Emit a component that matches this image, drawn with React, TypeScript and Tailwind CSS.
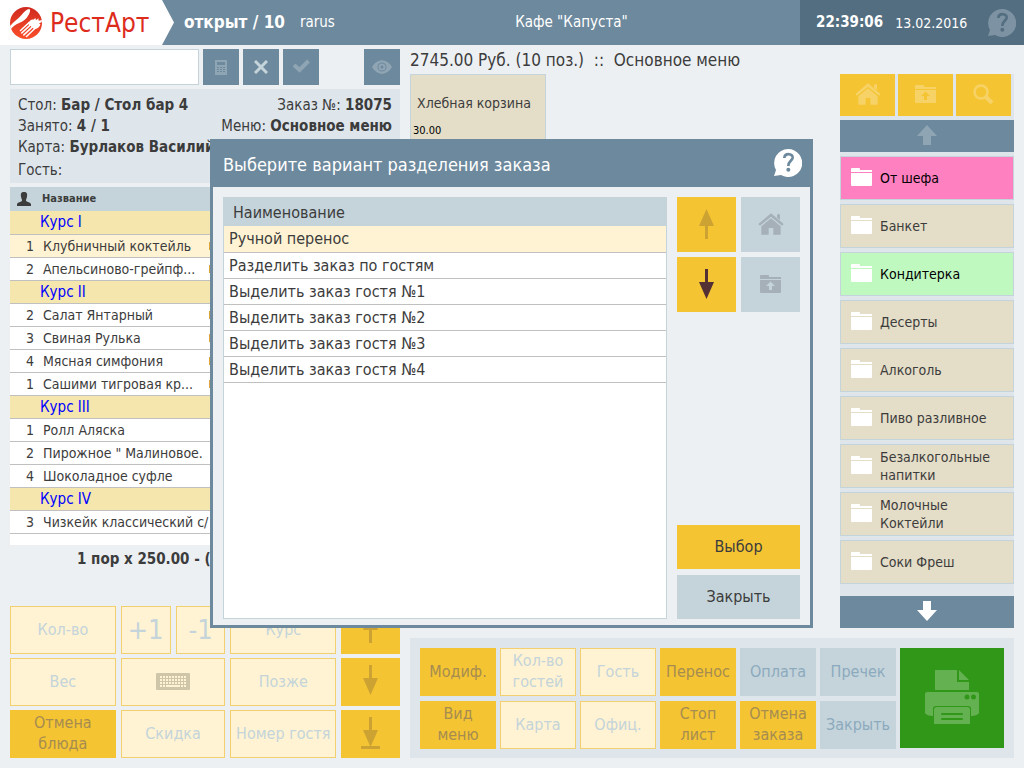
import React, { ReactNode, useState } from "react"
import clsx from "clsx"

type OrderRow = { course: string } | { qty: number; name: string; mark?: boolean }

const orderRows: OrderRow[] = [
  { course: "Курс I" },
  { qty: 1, name: "Клубничный коктейль", mark: true },
  { qty: 2, name: "Апельсиново-грейпф...", mark: true },
  { course: "Курс II" },
  { qty: 2, name: "Салат Янтарный", mark: true },
  { qty: 3, name: "Свиная Рулька", mark: true },
  { qty: 4, name: "Мясная симфония", mark: true },
  { qty: 1, name: "Сашими тигровая кр...", mark: true },
  { course: "Курс III" },
  { qty: 1, name: "Ролл Аляска" },
  { qty: 2, name: 'Пирожное " Малиновое.' },
  { qty: 4, name: "Шоколадное суфле" },
  { course: "Курс IV" },
  { qty: 3, name: "Чизкейк классический с/" },
]

const categories = [
  { name: "От шефа", color: "bg-[#ff80c0] text-black" },
  { name: "Банкет", color: "bg-[#e4ddc7]" },
  { name: "Кондитерка", color: "bg-[#c0f9c0] text-black" },
  { name: "Десерты", color: "bg-[#e4ddc7]" },
  { name: "Алкоголь", color: "bg-[#e4ddc7]" },
  { name: "Пиво разливное", color: "bg-[#e4ddc7]" },
  { name: "Безалкогольные напитки", color: "bg-[#e4ddc7]" },
  { name: "Молочные Коктейли", color: "bg-[#e4ddc7]" },
  { name: "Соки Фреш", color: "bg-[#e4ddc7]" },
]

const splitOptions = [
  "Ручной перенос",
  "Разделить заказ по гостям",
  "Выделить заказ гостя №1",
  "Выделить заказ гостя №2",
  "Выделить заказ гостя №3",
  "Выделить заказ гостя №4",
]

const tones = {
  yellow: "bg-[#f5c433] text-[#a68c50]",
  pale: "bg-[#fff3d3] border border-[#f3d06f] text-[#c4d4da]",
  gray: "bg-[#c4d4da] text-[#8caabe]",
}

const actions: { text: string; tone: keyof typeof tones }[] = [
  { text: "Модиф.", tone: "yellow" },
  { text: "Кол-во гостей", tone: "pale" },
  { text: "Гость", tone: "pale" },
  { text: "Перенос", tone: "yellow" },
  { text: "Оплата", tone: "gray" },
  { text: "Пречек", tone: "gray" },
  { text: "Вид меню", tone: "yellow" },
  { text: "Карта", tone: "pale" },
  { text: "Офиц.", tone: "pale" },
  { text: "Стоп лист", tone: "yellow" },
  { text: "Отмена заказа", tone: "yellow" },
  { text: "Закрыть", tone: "gray" },
]

const LogoIcon = () => (
  <svg width="32" height="32" viewBox="0 0 96 96" aria-hidden="true">
    <defs>
      <linearGradient id="logo" x1="0" y1="0" x2="0" y2="1">
        <stop offset="0" stopColor="#cf2a1f" />
        <stop offset="1" stopColor="#fb4f2a" />
      </linearGradient>
    </defs>
    <circle cx="48" cy="48" r="48" fill="url(#logo)" />
    <path d="M0 58C10 45 22 38 34 25C42 15 48 8 57 6C63 6 60 18 55 25C50 36 40 43 29 47C18 52 8 58 3 66Z" fill="#fff" />
    <path d="M54 50C58 42 64 37 70 38L76 33L78 40L85 34L86 41L96 39L95 46L87 49L91 52C90 60 80 68 72 66Z" fill="#fff" />
    <path d="M58 46L30 72M63 52L34 79M69 58L40 85M76 63L48 90" stroke="#fff" strokeWidth="4.500" />
  </svg>
)

const HelpIcon = ({ className, mark }: { className: string; mark: string }) => (
  <svg width="28" height="28" viewBox="0 0 84 84" className={className} aria-hidden="true">
    <path d="M42 0a42 42 0 1 1-21 78L0 81L6 63A42 42 0 0 1 42 0Z" fill="currentColor" />
    <path d="M31 27c1-16 26-14 25-1c-1 10-13 10-13 25" fill="none" stroke={mark} strokeWidth="8" />
    <circle cx="43" cy="62" r="6" fill={mark} />
  </svg>
)

const HomeIcon = () => (
  <svg width="26" height="22" viewBox="0 0 78 66" fill="currentColor" aria-hidden="true">
    <path d="M39 1L77 33L72 38L39 11L6 38L1 33Z" />
    <path d="M39 16L68 40V65H46V45H32V65H10V40Z" />
    <path d="M57 6l5-4l4 3v16l-9-7Z" />
  </svg>
)

const FolderIcon = () => (
  <svg width="21" height="18" viewBox="0 0 21 18" fill="currentColor" aria-hidden="true">
    <path d="M0 4V1q0-1 1-1h7q1 0 1 1v1h12v2ZM0 5h21v12q0 1-1 1H1q-1 0-1-1Z" />
  </svg>
)

const FolderUpIcon = () => (
  <svg width="21" height="18" viewBox="0 0 21 18" fill="currentColor" aria-hidden="true">
    <path d="M0 4V1q0-1 1-1h7q1 0 1 1v1h12v2Z" />
    <path fillRule="evenodd" d="M0 5h21v12q0 1-1 1H1q-1 0-1-1ZM10.500 6.500L6 11h3v4h3v-4h3Z" />
  </svg>
)

const SearchIcon = () => (
  <svg width="21" height="21" viewBox="0 0 21 21" fill="none" stroke="currentColor" aria-hidden="true">
    <circle cx="8" cy="8" r="6.500" strokeWidth="2.500" />
    <path d="M12.500 12.500L19 19" strokeWidth="4" />
  </svg>
)

const CalculatorIcon = () => (
  <svg width="12" height="15" viewBox="0 0 12 15" fill="currentColor" aria-hidden="true">
    <path
      fillRule="evenodd"
      d="M0 0h12v15H0ZM2 2v3h8V2ZM2 7v1h2V7ZM5 7v1h2V7ZM8 7v1h2V7ZM2 9v1h2V9ZM5 9v1h2V9ZM8 9v1h2V9ZM2 11v1h2v-1ZM5 11v1h2v-1ZM8 11v1h2v-1Z"
    />
  </svg>
)

const CloseIcon = () => (
  <svg width="14" height="14" viewBox="0 0 14 14" stroke="currentColor" strokeWidth="3" aria-hidden="true">
    <path d="M1 1L13 13M13 1L1 13" />
  </svg>
)

const CheckIcon = () => (
  <svg width="17" height="16" viewBox="0 0 17 16" fill="none" stroke="currentColor" strokeWidth="4" aria-hidden="true">
    <path d="M1 6L6.500 11L15.500 2" />
  </svg>
)

const EyeIcon = () => (
  <svg width="20" height="14" viewBox="0 0 20 14" fill="currentColor" aria-hidden="true">
    <path fillRule="evenodd" d="M0 7C5-2 15-2 20 7C15 16 5 16 0 7ZM10 2.500a4.500 4.500 0 1 0 0 9a4.500 4.500 0 1 0 0-9Z" />
    <path fillRule="evenodd" d="M10 3.500a3.500 3.500 0 1 0 0 7a3.500 3.500 0 1 0 0-7ZM10 5.500a1.500 1.500 0 1 1 0 3a1.500 1.500 0 1 1 0-3Z" />
  </svg>
)

const PersonIcon = () => (
  <svg width="14" height="14" viewBox="0 0 14 14" fill="currentColor" aria-hidden="true">
    <path d="M7 0c3 0 3.500 2 3 4.500C9.800 6.500 9 7 9 8.500c0 1.500 5 1.500 5 4V14H0v-1.500c0-2.500 5-2.500 5-4C5 7 4.200 6.500 4 4.500C3.500 2 4 0 7 0Z" />
  </svg>
)

const ThinArrow = ({ dir, bar }: { dir: "up" | "down"; bar?: boolean }) => (
  <svg width="19" height="32" viewBox="0 0 19 32" fill="currentColor" aria-hidden="true">
    <path d={dir === "up" ? "M9.500 0L17 17H11V30H8V17H2Z" : "M8 0H11V13H17L9.500 30L2 13H8Z"} />
    {bar && <path d="M0 29H19V32H0Z" />}
  </svg>
)

const WideArrow = ({ dir }: { dir: "up" | "down" }) => (
  <svg width="20" height="20" viewBox="0 0 20 20" className="mb-0.5" fill="currentColor" aria-hidden="true">
    <path d={dir === "up" ? "M10 0L20 11H14V20H6V11H0Z" : "M6 0H14V9H20L10 20L0 9H6Z"} />
  </svg>
)

const KeyboardIcon = () => (
  <svg width="34" height="17" viewBox="0 0 34 17" aria-hidden="true">
    <rect width="34" height="17" rx="1" fill="#cfc6aa" />
    <g stroke="#fff3d3" strokeWidth="2">
      <path d="M4 4H30M4 7H30M4 10H30" strokeDasharray="2 1" />
      <path d="M4 13H6M7 13H9M10 13H24M25 13H27M28 13H30" />
    </g>
  </svg>
)

const PrinterIcon = () => (
  <svg width="54" height="54" viewBox="0 0 54 54" className="mb-0.5" fill="#64b152" aria-hidden="true">
    <path d="M10 0H32V12H44V20H10ZM34 0L44 10H34Z" />
    <path
      fillRule="evenodd"
      d="M2 22H52Q54 22 54 24V43Q52 46 46 46V39Q46 36 43 36H11Q8 36 8 39V46Q2 46 0 43V24Q0 22 2 22ZM42 24.500a2.500 2.500 0 1 0 0 5a2.500 2.500 0 1 0 0-5ZM48.500 24.500a2.500 2.500 0 1 0 0 5a2.500 2.500 0 1 0 0-5Z"
    />
    <path d="M12 37H42Q45 37 45 40V54H9V40Q9 37 12 37Z" />
    <path d="M17 44H37M17 49H37" stroke="#319719" strokeWidth="2" strokeLinecap="round" />
  </svg>
)

const ToolButton = ({ label, className, children }: { label: string; className?: string; children: ReactNode }) => (
  <button aria-label={label} className={clsx("flex size-9 items-center justify-center bg-[#6d899d]", className)}>
    {children}
  </button>
)

const PadButton = ({
  tone,
  label,
  className = "px-1 text-base",
  children,
}: {
  tone: keyof typeof tones
  label?: string
  className?: string
  children: ReactNode
}) => (
  <button
    aria-label={label}
    className={clsx("flex h-12 items-center justify-center pb-0.5 text-center leading-[21px]", tones[tone], className)}
  >
    {children}
  </button>
)

const Header = () => (
  <header className="flex h-[45px] items-center bg-[#6d899d] text-white">
    <div className="flex h-full w-[174px] items-center gap-2 bg-white pl-[10px] [clip-path:polygon(0_0,162px_0,100%_50%,162px_100%,0_100%)]">
      <LogoIcon />
      <span className="text-[26px] leading-8 text-[#dd2c1c]">РестАрт</span>
    </div>
    <span className="ml-[10px] text-[17px] font-bold">открыт / 10</span>
    <span className="ml-[15px] text-[15px]">rarus</span>
    <h1 className="flex-1 pl-2 text-center text-[15px]">Кафе "Капуста"</h1>
    <div className="flex h-full w-56 items-center bg-[#536e81] pr-2 pl-4">
      <time className="text-[15px] font-bold">22:39:06</time>
      <time className="ml-3 text-sm">13.02.2016</time>
      <button aria-label="Справка" className="ml-auto">
        <HelpIcon className="text-[#7d93a3]" mark="#536e81" />
      </button>
    </div>
  </header>
)

const OrderInfo = () => (
  <div className="mt-1 h-[94px] bg-[#dee6ec] px-2 pt-1.5 text-[15px] leading-[21px]">
    <div className="flex justify-between">
      <span>
        Стол: <b>Бар / Стол бар 4</b>
      </span>
      <span>
        Заказ №: <b>18075</b>
      </span>
    </div>
    <div className="flex justify-between">
      <span>
        Занято: <b>4 / 1</b>
      </span>
      <span>
        Меню: <b>Основное меню</b>
      </span>
    </div>
    <div>
      Карта: <b>Бурлаков Василий</b>
    </div>
    <div className="pt-0.5">Гость:</div>
  </div>
)

const OrderTable = () => (
  <div className="mt-1 flex-1 overflow-hidden bg-white">
    <table className="w-full table-fixed border-collapse text-sm leading-[22px]">
      <colgroup>
        <col className="w-[30px]" />
        <col className="w-[169px]" />
        <col />
      </colgroup>
      <thead>
        <tr className="h-6 bg-[#c4d4da] text-left text-[11px] leading-4">
          <th className="py-0 pl-[7px]" aria-label="Гость">
            <PersonIcon />
          </th>
          <th className="py-0 pl-0.5" colSpan={2}>
            Название
          </th>
        </tr>
      </thead>
      <tbody>
        {orderRows.map((row, i) =>
          "course" in row ? (
            <tr key={i} className="h-[23px] border-b border-[#c0c0c0] bg-[#f4e6ad] text-[15px] text-[#0000ff]">
              <td className="p-0" />
              <td className="p-0" colSpan={2}>
                {row.course}
              </td>
            </tr>
          ) : (
            <tr key={i} className={clsx("h-[23px] border-b border-[#c0c0c0]", i === 1 && "bg-[#fff3d3]")}>
              <td className="p-0 pr-1.5 text-right">{row.qty}</td>
              <td className="p-0 pl-[3px] whitespace-nowrap">{row.name}</td>
              <td className="p-0">{row.mark && <span className="block h-2 w-2 bg-[#e0a63c]" />}</td>
            </tr>
          ),
        )}
      </tbody>
    </table>
  </div>
)

const OrderPanel = () => {
  const [query, setQuery] = useState("")

  return (
    <section className="flex flex-col">
      <div className="flex gap-1">
        <input
          aria-label="Поиск"
          value={query}
          onChange={(e) => setQuery(e.target.value)}
          className="h-9 w-[189px] min-w-0 border border-[#c4d4da] bg-white px-2 text-base outline-none"
        />
        <ToolButton label="Калькулятор" className="text-[#8fa5b4]">
          <CalculatorIcon />
        </ToolButton>
        <ToolButton label="Очистить" className="text-[#c4d4da]">
          <CloseIcon />
        </ToolButton>
        <ToolButton label="Принять" className="text-[#8fa5b4]">
          <CheckIcon />
        </ToolButton>
        <ToolButton label="Просмотр" className="ml-auto text-[#8fa5b4]">
          <EyeIcon />
        </ToolButton>
      </div>
      <OrderInfo />
      <OrderTable />
      <p className="mb-[33px] pl-[67px] text-[15px] leading-7 font-bold">1 пор x 250.00 - (</p>
      <div className="grid grid-cols-[106fr_50fr_50fr_106fr_59fr] gap-x-[5px] gap-y-1">
        <PadButton tone="pale">Кол-во</PadButton>
        <PadButton tone="pale" className="text-[27px]">
          +1
        </PadButton>
        <PadButton tone="pale" className="text-[27px]">
          -1
        </PadButton>
        <PadButton tone="pale">Курс</PadButton>
        <PadButton tone="yellow" label="Вверх" className="text-[#cca233]">
          <ThinArrow dir="up" />
        </PadButton>
        <PadButton tone="pale">Вес</PadButton>
        <PadButton tone="pale" label="Клавиатура" className="col-span-2">
          <KeyboardIcon />
        </PadButton>
        <PadButton tone="pale">Позже</PadButton>
        <PadButton tone="yellow" label="Вниз" className="text-[#cca233]">
          <ThinArrow dir="down" />
        </PadButton>
        <PadButton tone="yellow" className="px-4 text-base">
          Отмена блюда
        </PadButton>
        <PadButton tone="pale" className="col-span-2 text-base">
          Скидка
        </PadButton>
        <PadButton tone="pale">Номер гостя</PadButton>
        <PadButton tone="yellow" label="В конец" className="text-[#cca233]">
          <ThinArrow dir="down" bar />
        </PadButton>
      </div>
    </section>
  )
}

const CategorySidebar = () => (
  <nav className="flex w-[174px] flex-col bg-[#dee6ec]">
    <div className="grid grid-cols-3 gap-[3px] pr-[3px] text-[#f7d266]">
      <button aria-label="Главная" className="flex h-[42px] items-center justify-center bg-[#f5c433] pb-0.5">
        <HomeIcon />
      </button>
      <button aria-label="На уровень выше" className="flex h-[42px] items-center justify-center bg-[#f5c433] pb-0.5">
        <FolderUpIcon />
      </button>
      <button aria-label="Найти" className="flex h-[42px] items-center justify-center bg-[#f5c433] pb-0.5">
        <SearchIcon />
      </button>
    </div>
    <button aria-label="Прокрутить вверх" className="my-1 flex h-8 items-center justify-center bg-[#6d899d] text-[#8fa5b4]">
      <WideArrow dir="up" />
    </button>
    <div className="flex flex-col gap-1">
      {categories.map(({ name, color }) => (
        <button
          key={name}
          className={clsx("flex h-11 items-center gap-2 border border-[#c4d4da] pl-[10px] text-left text-sm leading-[18px]", color)}
        >
          <span className="pb-0.5 text-white">
            <FolderIcon />
          </span>
          <span className="flex-1">{name}</span>
        </button>
      ))}
    </div>
    <button aria-label="Прокрутить вниз" className="mt-auto flex h-8 items-center justify-center bg-[#6d899d] text-white">
      <WideArrow dir="down" />
    </button>
  </nav>
)

const MenuPanel = () => (
  <section className="flex flex-col">
    <h2 className="h-[25px] text-[17px] leading-[23px] whitespace-pre">2745.00 Руб. (10 поз.)  ::  Основное меню</h2>
    <div className="flex flex-1 items-stretch justify-between">
      <div>
        <button className="flex h-[74px] w-[136px] flex-col border border-[#c4d4da] bg-[#e4ddc7] text-left">
          <span className="px-1.5 pt-[19px] text-sm leading-[18px]">Хлебная корзина</span>
          <span className="px-0.5 pt-[11px] text-[11px] leading-4 text-black">30.00</span>
        </button>
      </div>
      <CategorySidebar />
    </div>
    <div className="mt-[10px] flex gap-1 bg-[#dee6ec] p-[10px] pb-[9px]">
      <div className="grid flex-1 grid-cols-6 gap-x-1 gap-y-[5px]">
        {actions.map(({ text, tone }) => (
          <PadButton key={text + tone} tone={tone}>
            {text}
          </PadButton>
        ))}
      </div>
      <button aria-label="Печать" className="flex h-[100px] w-[104px] items-center justify-center bg-[#319719]">
        <PrinterIcon />
      </button>
    </div>
  </section>
)

const SplitDialog = () => {
  const [selected, setSelected] = useState(0)

  return (
    <div className="absolute inset-0 flex items-center justify-center pr-px pb-px">
      <div
        role="dialog"
        aria-labelledby="split-title"
        className="w-[603px] border-[3px] border-t-0 border-[#6d899d] bg-[#ecf0f3]"
      >
        <div className="flex h-12 items-center justify-between bg-[#6d899d] pr-2 pl-[10px] text-white">
          <h2 id="split-title" className="pt-1 text-lg">
            Выберите вариант разделения заказа
          </h2>
          <button aria-label="Справка">
            <HelpIcon className="text-white" mark="#6d899d" />
          </button>
        </div>
        <div className="flex gap-[10px] px-[10px] pt-[10px] pb-1.5">
          <div className="min-h-[422px] flex-1 border border-[#c4d4da] bg-white">
            <table className="w-full border-collapse text-base leading-[25px]">
              <thead>
                <tr className="h-7 bg-[#c4d4da] text-left">
                  <th className="p-0 pl-[9px] font-normal">Наименование</th>
                </tr>
              </thead>
              <tbody>
                {splitOptions.map((option, i) => (
                  <tr
                    key={option}
                    onClick={() => setSelected(i)}
                    className={clsx("h-[26px] border-b border-[#c0c0c0]", i === selected && "bg-[#fff3d3]")}
                  >
                    <td className="p-0 pl-[5px]">{option}</td>
                  </tr>
                ))}
              </tbody>
            </table>
          </div>
          <div className="flex w-[123px] flex-col">
            <div className="grid grid-cols-2 gap-[5px]">
              <button aria-label="Вверх" className="flex h-[55px] items-center justify-center bg-[#f5c433] text-[#cca233]">
                <ThinArrow dir="up" />
              </button>
              <button aria-label="Главная" className="flex h-[55px] items-center justify-center bg-[#c4d4da] pb-0.5 text-[#a5b0b9]">
                <HomeIcon />
              </button>
              <button aria-label="Вниз" className="flex h-[55px] items-center justify-center bg-[#f5c433] text-[#523033]">
                <ThinArrow dir="down" />
              </button>
              <button aria-label="На уровень выше" className="flex h-[55px] items-center justify-center bg-[#c4d4da] pb-0.5 text-[#a5b0b9]">
                <FolderUpIcon />
              </button>
            </div>
            <button className="mt-auto h-11 bg-[#f5c433] text-base">Выбор</button>
            <button className="mt-1.5 h-11 bg-[#c4d4da] text-base">Закрыть</button>
          </div>
        </div>
      </div>
    </div>
  )
}

const App = () => (
  <div className="relative flex min-h-screen flex-col bg-[#ecf0f3] font-['DejaVu_Sans_Condensed','DejaVu_Sans',sans-serif] text-[#3c3c3c]">
    <Header />
    <main className="grid flex-1 grid-cols-[390fr_604fr] gap-[10px] px-[10px] pt-1 pb-[10px]">
      <OrderPanel />
      <MenuPanel />
    </main>
    <SplitDialog />
  </div>
)

export default App
